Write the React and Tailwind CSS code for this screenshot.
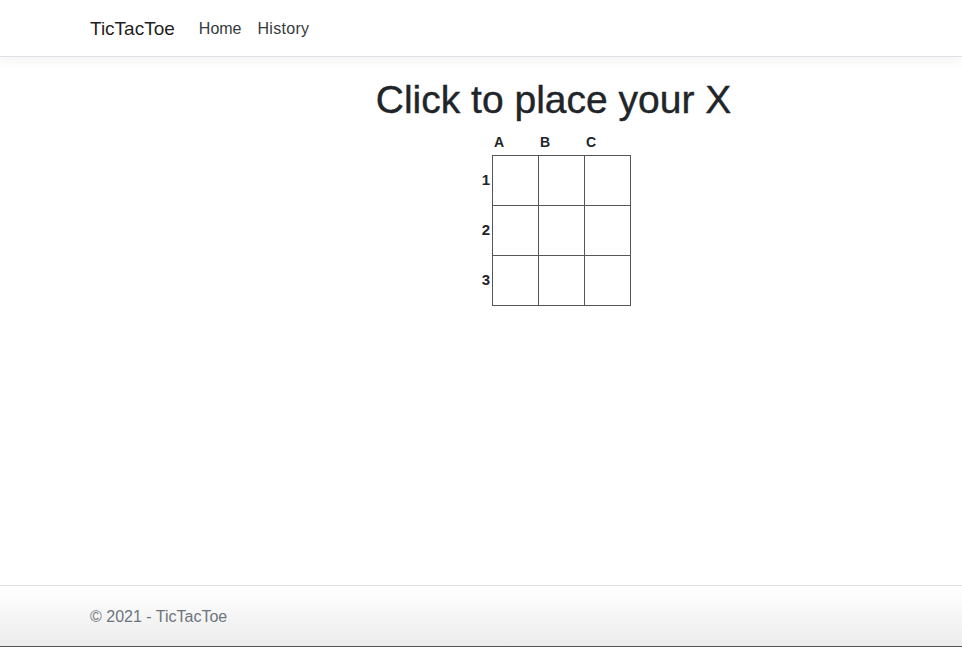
export default function App() {
  const cols = ["A", "B", "C"];
  const rows = ["1", "2", "3"];
  return (
    <div
      className="h-[647px] flex flex-col bg-white text-[#212529]"
      style={{ fontFamily: '"Liberation Sans", Arial, sans-serif' }}
    >
      <nav className="h-[57px] pt-[2px] border-b border-[#dee2e6] shadow-[0_4px_12px_rgba(0,0,0,0.05)] flex items-center pl-[90px] bg-white">
        <span className="text-[19px] text-[rgba(0,0,0,0.9)] mr-[24px]">TicTacToe</span>
        <span className="text-[16px] text-[#343a40] mr-[16px]">Home</span>
        <span className="text-[16px] tracking-[0.3px] text-[#343a40]">History</span>
      </nav>
      <main className="flex-1 pl-[145px]">
        <h1 className="text-[39px] leading-[48px] font-medium text-center mt-[19px] mb-[8px] [-webkit-text-stroke:0.4px_#212529]">
          Click to place your X
        </h1>
        <div className="flex justify-center">
          <div className="mr-[-2px]">
            <div className="flex pl-[14px] h-[23px] pb-[4px] items-center">
              {cols.map((c) => (
                <div key={c} className="w-[46px] pl-[2px] text-[14px] font-bold leading-none">
                  {c}
                </div>
              ))}
            </div>
            <div className="flex">
              <div className="flex flex-col w-[14px]">
                {rows.map((r) => (
                  <div key={r} className="h-[50px] flex items-center justify-end pr-[2px] text-[15px] font-bold">
                    {r}
                  </div>
                ))}
              </div>
              <div className="grid grid-cols-[repeat(3,46px)] grid-rows-[repeat(3,50px)] border-l border-t border-[#555]">
                {Array.from({ length: 9 }).map((_, i) => (
                  <div key={i} className="border-r border-b border-[#555]" />
                ))}
              </div>
            </div>
          </div>
        </div>
      </main>
      <footer className="h-[62px] pt-[2px] border-t border-[#dee2e6] border-b border-b-[#555] bg-gradient-to-b from-white to-[#ececec] flex items-center pl-[90px] text-[16px] text-[#6c757d]">
        © 2021 - TicTacToe
      </footer>
    </div>
  );
}
